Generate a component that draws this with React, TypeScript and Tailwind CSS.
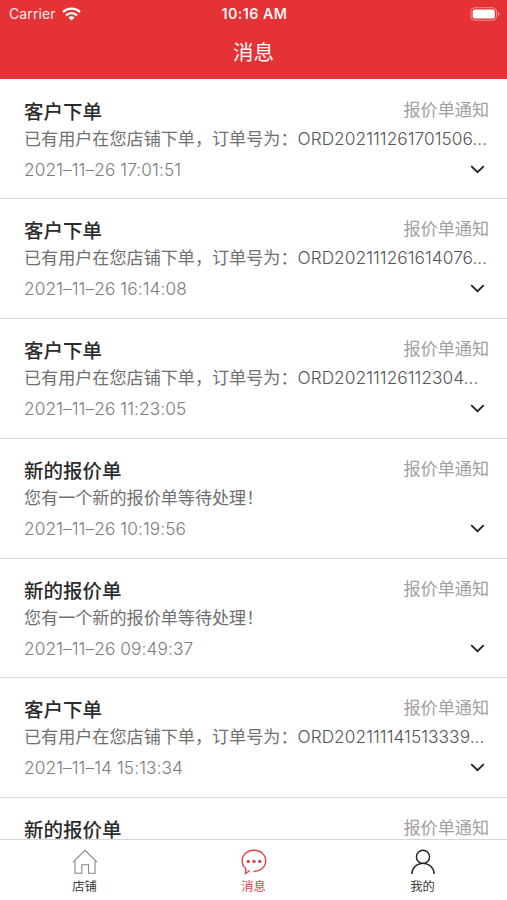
import React from 'react';

type Message = {
  title: string;
  content?: string;
  order?: string;
  time?: string;
};

const orderText = '已有用户在您店铺下单，订单号为：';
const quoteText = '您有一个新的报价单等待处理！';

const messages: Message[] = [
  { title: '客户下单', content: orderText, order: 'ORD202111261701506...', time: '2021–11–26 17:01:51' },
  { title: '客户下单', content: orderText, order: 'ORD202111261614076...', time: '2021–11–26 16:14:08' },
  { title: '客户下单', content: orderText, order: 'ORD20211126112304...', time: '2021–11–26 11:23:05' },
  { title: '新的报价单', content: quoteText, time: '2021–11–26 10:19:56' },
  { title: '新的报价单', content: quoteText, time: '2021–11–26 09:49:37' },
  { title: '客户下单', content: orderText, order: 'ORD202111141513339...', time: '2021–11–14 15:13:34' },
  { title: '新的报价单' },
];

function StatusBar() {
  return (
    <div className="grid h-7 grid-cols-3 items-center pl-[9px] pr-[7px] font-['Inter',sans-serif] text-[14px]">
      <div className="flex items-center gap-1.5 text-white/90">
        <span className="pb-px tracking-[0.1px]">Carrier</span>
        <svg className="mb-px" width="19" height="14" viewBox="0 0 19 14" fill="none" stroke="white" strokeWidth="2.3">
          <path d="M1 5.1C5.7.5 13.3.5 18 5.1" />
          <path d="M4 8.3c3-2.9 8-2.9 11 0" />
          <path d="M9.5 13.6 6.4 10.4c1.8-1.6 4.4-1.6 6.2 0z" fill="white" stroke="none" />
        </svg>
      </div>
      <div className="whitespace-nowrap text-center text-[14.3px] font-semibold tracking-[0.45px] text-white/95">10:16 AM</div>
      <div className="flex justify-end">
        <svg className="mb-px" width="30" height="14" viewBox="0 0 30 14" fill="none">
          <rect x="1" y="0.7" width="25.5" height="12.6" rx="3.8" stroke="white" strokeOpacity="0.45" />
          <rect x="2.7" y="2.4" width="22.2" height="9.2" rx="2.2" fill="white" />
          <path d="M28 5v4c1.9-.7 1.9-3.3 0-4z" fill="white" fillOpacity="0.5" />
        </svg>
      </div>
    </div>
  );
}

function MessageItem({ title, content, order, time }: Message) {
  return (
    <li className="border-b border-[#dedede] pl-[24px] pr-[18px] pt-[17px] last:border-b-0 not-last:h-[119.75px]">
      <div className="flex h-[27px] items-center justify-between">
        <h2 className="text-[19.5px] leading-[27px] font-medium text-[#2b2b2b]">{title}</h2>
        <span className="pb-[4px] text-[17.1px] leading-[23px] text-[#a0a0a0]">报价单通知</span>
      </div>
      {content && (
        <div className="flex h-7 items-center whitespace-nowrap text-[17.1px] text-[#707070]">
          <span>{content}</span>
          {order && (
            <span className="pt-[2px] font-['Inter',sans-serif] text-[17.3px] font-light tracking-[0.04px] text-[#555]">{order}</span>
          )}
        </div>
      )}
      {time && (
        <div className="flex h-[34px] items-center justify-between">
          <time className="pt-[2px] font-['Inter',sans-serif] text-[17.3px] font-light tracking-[0.08px] text-[#7c7c7c]">{time}</time>
          <svg className="mr-[4.5px] mt-px" width="15" height="9" viewBox="0 0 15 9" fill="none" stroke="#222" strokeWidth="1.8">
            <path d="m1.2 1.2 6.3 6 6.3-6" />
          </svg>
        </div>
      )}
    </li>
  );
}

function TabBar() {
  return (
    <nav className="grid h-[61px] shrink-0 grid-cols-3 border-t border-[#d5d5d5] bg-white pt-[9px] text-[12.3px] leading-[18px] text-[#3a3a3a]">
      <a className="flex flex-col items-center gap-[2px]">
        <svg width="26" height="26" viewBox="0 0 26 26" fill="none" stroke="#858585" strokeWidth="1.1">
          <path d="M1 13.2 13 1.3l12 11.9" />
          <path d="M3 12v12.2h6.8v-8.5h6.7v8.5H23V12" />
        </svg>
        店铺
      </a>
      <a className="flex flex-col items-center gap-[2px] text-[#dc4549]">
        <svg width="26" height="26" viewBox="0 0 26 26" fill="none" stroke="currentColor" strokeWidth="1.4">
          <path d="M12.5 22.5c7 0 12.2-4.4 12.2-10.5S19.8 1.2 13 1.2 1.2 6 1.2 12c0 3.4 1.6 6 3.7 7.7l-.4 4.8 4.3-3" />
          <g fill="currentColor" stroke="none">
            <circle cx="7.3" cy="12.4" r="1.7" />
            <circle cx="13" cy="12.4" r="1.7" />
            <circle cx="18.7" cy="12.4" r="1.7" />
          </g>
        </svg>
        消息
      </a>
      <a className="flex flex-col items-center gap-[2px]">
        <svg width="26" height="26" viewBox="0 0 26 26" fill="none" stroke="#222" strokeWidth="1.4">
          <circle cx="13" cy="7.8" r="6.6" />
          <path d="M1.8 25c.4-6.4 5-10.6 11.2-10.6S23.8 18.6 24.2 25" />
        </svg>
        我的
      </a>
    </nav>
  );
}

export default function App() {
  return (
    <div className="flex h-[900px] w-[507px] flex-col overflow-hidden bg-white font-['Noto_Sans_CJK_SC',sans-serif]">
      <header className="h-[79px] shrink-0 bg-[#e43235] text-white">
        <StatusBar />
        <h1 className="pt-[5px] text-center text-[20.5px] leading-9">消息</h1>
      </header>
      <ul className="min-h-0 flex-1 overflow-hidden pt-[0.5px]">
        {messages.map((message, index) => (
          <MessageItem key={index} {...message} />
        ))}
      </ul>
      <TabBar />
    </div>
  );
}
